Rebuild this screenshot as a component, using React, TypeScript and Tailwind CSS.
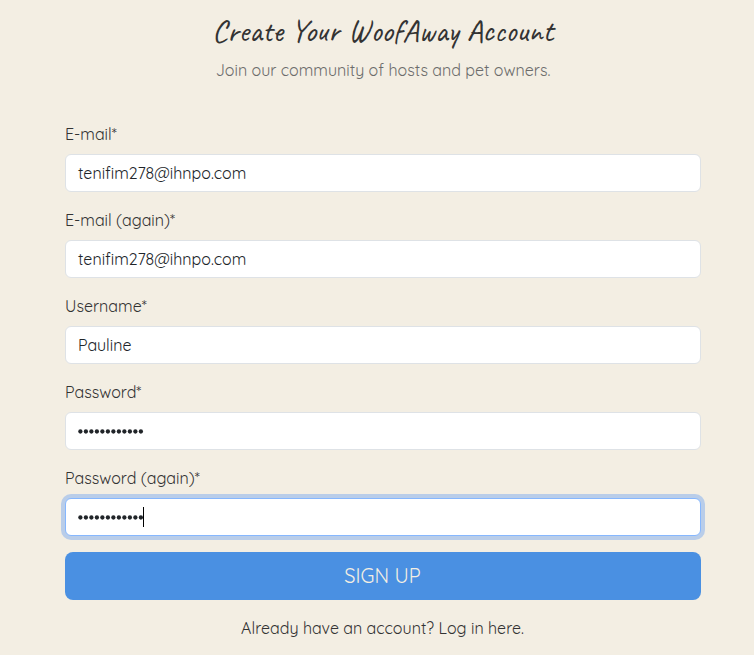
import React from "react";

type FieldProps = {
  id: string;
  label: string;
  value: string;
  secret?: boolean;
  focused?: boolean;
};

function Field({ id, label, value, secret, focused }: FieldProps) {
  return (
    <div className="mb-4">
      <label id={id} className="mb-2 block h-6 whitespace-nowrap leading-6">
        {label}
      </label>
      <div
        role="textbox"
        aria-labelledby={id}
        className={`flex h-[38px] items-center rounded-md border bg-white px-3 ${
          focused ? "border-[#86b7fe] shadow-[0_0_0_4px_#b9cde9]" : "border-[#dee2e6]"
        }`}
      >
        {secret ? (
          <svg width="66" height="6" viewBox="0 0 66 6" className="mt-px" fill="#212529">
            {Array.from(value).map((_, i) => (
              <circle key={i} cx={2.4 + i * 5.5} cy="2.5" r="2.15" />
            ))}
          </svg>
        ) : (
          <span className="h-6 whitespace-nowrap leading-6 text-[#212529]">{value}</span>
        )}
        {focused && <span className="-ml-px h-5 w-px bg-black" />}
      </div>
    </div>
  );
}

export default function App() {
  return (
    <main className="h-[655px] w-full overflow-hidden bg-[#f3eee3] pl-[65px] pr-[53px] pt-3 font-['Quicksand','Lato',sans-serif] text-base font-normal text-[#333333]">
      <header className="mb-10 text-center">
        <h1 className="mb-2 h-[38px] whitespace-nowrap pr-px font-['Caveat','Lato',cursive] text-[32px] font-medium leading-[38px]">
          Create Your WoofAway Account
        </h1>
        <p className="h-6 whitespace-nowrap leading-6 text-[#6c6c6b]">
          Join our community of hosts and pet owners.
        </p>
      </header>
      <form>
        <Field id="email" label="E-mail*" value="tenifim278@ihnpo.com" />
        <Field id="email2" label="E-mail (again)*" value="tenifim278@ihnpo.com" />
        <Field id="username" label="Username*" value="Pauline" />
        <Field id="password" label="Password*" value="************" secret />
        <Field id="password2" label="Password (again)*" value="************" secret focused />
        <button type="button" className="block h-12 w-full rounded-lg bg-[#4a90e2] pr-px text-xl text-[#f3eee3]">
          SIGN UP
        </button>
      </form>
      <p className="mt-4 whitespace-nowrap pr-px text-center leading-6">Already have an account? Log in here.</p>
    </main>
  );
}
